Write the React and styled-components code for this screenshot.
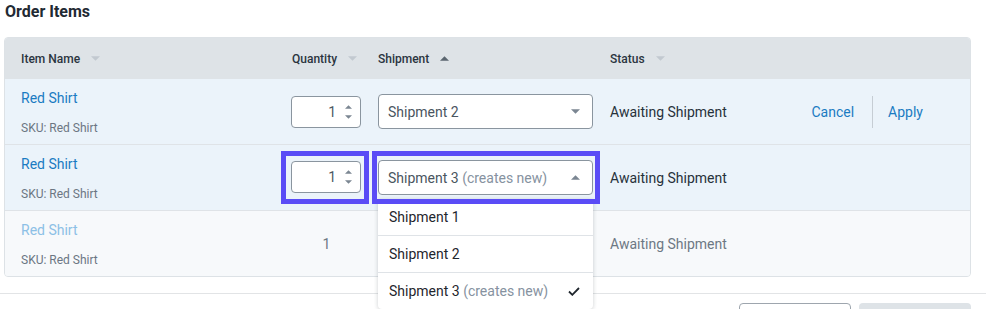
import React from "react";
import styled, { createGlobalStyle } from "styled-components";

const Global = createGlobalStyle`
  html, body { margin: 0; padding: 0; background: #ffffff; }
  body { font-family: Roboto, "Liberation Sans", Arial, sans-serif; color: #27313b; }
  * { box-sizing: border-box; }
`;

const Page = styled.div`
  width: 986px;
  height: 309px;
  overflow: hidden;
`;

const Content = styled.div`
  padding: 2px 15px 0 4px;
`;

const Title = styled.h2`
  margin: 0 0 15px 1px;
  font-size: 16px;
  line-height: 20px;
  font-weight: 700;
  color: #1f2a33;
`;

const Table = styled.div`
  border: 1px solid #dde2e6;
  border-radius: 4px;
  background: #f7f9fb;
`;

const COLS = "276px 91px 228px 1fr";

const HeaderRow = styled.div`
  display: grid;
  grid-template-columns: ${COLS};
  height: 41px;
  background: #dee3e7;
  border-radius: 3px 3px 0 0;
`;

const HeadCell = styled.div`
  display: flex;
  align-items: center;
  gap: 11px;
  padding-left: ${(p) => p.$pl}px;
  font-size: 12px;
  font-weight: 500;
  color: #2b353f;
`;

const Row = styled.div`
  display: grid;
  grid-template-columns: ${COLS};
  height: ${(p) => (p.$last ? 65 : 66)}px;
  background: ${(p) => (p.$muted ? "#f7f9fb" : "#ebf3fa")};
  border-bottom: ${(p) => (p.$last ? "none" : "1px solid #dfe3e7")};
  border-radius: ${(p) => (p.$last ? "0 0 3px 3px" : "0")};
`;

const NameCell = styled.div`
  display: flex;
  flex-direction: column;
  justify-content: center;
  gap: 12px;
  padding-left: 16px;
  padding-top: 1px;
`;

const ItemLink = styled.a`
  font-size: 14px;
  line-height: 20px;
  color: ${(p) => (p.$muted ? "#8cc0e6" : "#1a7bc2")};
  text-decoration: none;
`;

const Sku = styled.div`
  font-size: 12px;
  line-height: 16px;
  color: #6b7683;
`;

const Cell = styled.div`
  position: relative;
  display: flex;
  align-items: center;
  justify-content: ${(p) => p.$justify || "flex-start"};
  padding-left: ${(p) => p.$pl || 0}px;
`;

const Ring = styled.div`
  position: relative;
  z-index: 2;
  display: flex;
  border: 5px solid #5a4cf6;
  padding: ${(p) => p.$pad};
`;

const QtyBox = styled.div`
  width: 70px;
  height: 32px;
  margin-left: ${(p) => p.$ml || 0}px;
  display: flex;
  align-items: center;
  justify-content: flex-end;
  gap: 9px;
  padding-right: 8px;
  background: #ffffff;
  border: 1px solid #8a959f;
  border-radius: 4px;
  font-size: 14px;
  color: #4d5863;
`;

const Spinner = styled.div`
  display: flex;
  flex-direction: column;
  gap: 6px;
`;

const SelectBox = styled.div`
  width: 215px;
  height: 35px;
  margin-left: ${(p) => p.$ml || 0}px;
  display: flex;
  align-items: center;
  justify-content: space-between;
  padding: 0 12px 0 9px;
  background: #ffffff;
  border: 1px solid #8a959f;
  border-radius: 4px;
  font-size: 14px;
  color: #4a5560;
`;

const Hint = styled.span`
  color: #8692a0;
`;

const Status = styled.div`
  font-size: 14px;
  color: ${(p) => (p.$muted ? "#6d7884" : "#27313b")};
`;

const PlainQty = styled.div`
  font-size: 14px;
  color: #6d7884;
`;

const StatusCell = styled.div`
  display: flex;
  align-items: center;
  padding-left: 10px;
  padding-right: 47px;
`;

const Actions = styled.div`
  margin-left: auto;
  display: flex;
  align-items: center;
`;

const ActionLink = styled.a`
  font-size: 14px;
  color: #1a7bc2;
  text-decoration: none;
`;

const Divider = styled.div`
  width: 1px;
  height: 32px;
  background: #c6cdd4;
  margin: 0 15px 0 18px;
`;

const Menu = styled.div`
  position: absolute;
  z-index: 1;
  left: 6px;
  top: 54px;
  width: 215px;
  background: #ffffff;
  border-radius: 0 0 4px 4px;
  box-shadow: 0 1px 4px rgba(30, 40, 50, 0.22);
`;

const MenuItem = styled.div`
  height: ${(p) => (p.$first ? 36 : 37)}px;
  display: flex;
  align-items: center;
  justify-content: space-between;
  padding: 0 13px 0 11px;
  font-size: 14px;
  color: #1f262d;
  border-top: ${(p) => (p.$first ? "none" : "1px solid #dfe3e7")};
`;

const Footer = styled.div`
  margin-top: 16px;
  border-top: 1px solid #e2e4e6;
  padding: 9px 15px 0 0;
  display: flex;
  justify-content: flex-end;
  gap: 8px;
`;

const Button = styled.button`
  width: 112px;
  height: 34px;
  border-radius: 4px;
  border: ${(p) => (p.$primary ? "none" : "1px solid #9ea6ae")};
  background: ${(p) => (p.$primary ? "#dee3e7" : "#ffffff")};
  font-family: inherit;
  font-size: 14px;
`;

const Caret = ({ up, color = "#c2c9d0", w = 9, h = 5 }) => (
  <svg width={w} height={h} viewBox="0 0 10 5" style={{ display: "block" }}>
    <path d={up ? "M0 5 L5 0 L10 5 Z" : "M0 0 L10 0 L5 5 Z"} fill={color} />
  </svg>
);

const Check = () => (
  <svg width="12" height="9" viewBox="0 0 12 9" style={{ display: "block" }}>
    <path d="M1 4.5 L4.3 7.8 L11 1" fill="none" stroke="#1f262d" strokeWidth="1.8" />
  </svg>
);

const Qty = ({ ml }) => (
  <QtyBox $ml={ml}>
    <span>1</span>
    <Spinner>
      <Caret up color="#7b8692" w={7} h={4} />
      <Caret color="#7b8692" w={7} h={4} />
    </Spinner>
  </QtyBox>
);

export default function App() {
  return (
    <Page>
      <Global />
      <Content>
        <Title>Order Items</Title>
        <Table>
          <HeaderRow>
            <HeadCell $pl={16}>
              Item Name <Caret />
            </HeadCell>
            <HeadCell $pl={11}>
              Quantity <Caret />
            </HeadCell>
            <HeadCell $pl={6}>
              Shipment <Caret up color="#5b6670" />
            </HeadCell>
            <HeadCell $pl={10}>
              Status <Caret />
            </HeadCell>
          </HeaderRow>

          <Row>
            <NameCell>
              <ItemLink>Red Shirt</ItemLink>
              <Sku>SKU: Red Shirt</Sku>
            </NameCell>
            <Cell>
              <Qty ml={10} />
            </Cell>
            <Cell>
              <SelectBox $ml={6}>
                <span>Shipment 2</span>
                <Caret color="#7b8692" />
              </SelectBox>
            </Cell>
            <StatusCell>
              <Status>Awaiting Shipment</Status>
              <Actions>
                <ActionLink>Cancel</ActionLink>
                <Divider />
                <ActionLink>Apply</ActionLink>
              </Actions>
            </StatusCell>
          </Row>

          <Row>
            <NameCell>
              <ItemLink>Red Shirt</ItemLink>
              <Sku>SKU: Red Shirt</Sku>
            </NameCell>
            <Cell>
              <Ring $pad="5px 3px 6px 5px">
                <Qty />
              </Ring>
            </Cell>
            <Cell>
              <Ring $pad="4px 2px 4px 1px">
                <SelectBox>
                  <span>
                    Shipment 3 <Hint>(creates new)</Hint>
                  </span>
                  <Caret up color="#7b8692" />
                </SelectBox>
              </Ring>
              <Menu>
                <MenuItem $first>Shipment 1</MenuItem>
                <MenuItem>Shipment 2</MenuItem>
                <MenuItem>
                  <span>
                    Shipment 3 <Hint>(creates new)</Hint>
                  </span>
                  <Check />
                </MenuItem>
              </Menu>
            </Cell>
            <StatusCell>
              <Status>Awaiting Shipment</Status>
            </StatusCell>
          </Row>

          <Row $muted $last>
            <NameCell>
              <ItemLink $muted>Red Shirt</ItemLink>
              <Sku>SKU: Red Shirt</Sku>
            </NameCell>
            <Cell $justify="center">
              <PlainQty>1</PlainQty>
            </Cell>
            <Cell />
            <StatusCell>
              <Status $muted>Awaiting Shipment</Status>
            </StatusCell>
          </Row>
        </Table>
      </Content>
      <Footer>
        <Button />
        <Button $primary />
      </Footer>
    </Page>
  );
}
